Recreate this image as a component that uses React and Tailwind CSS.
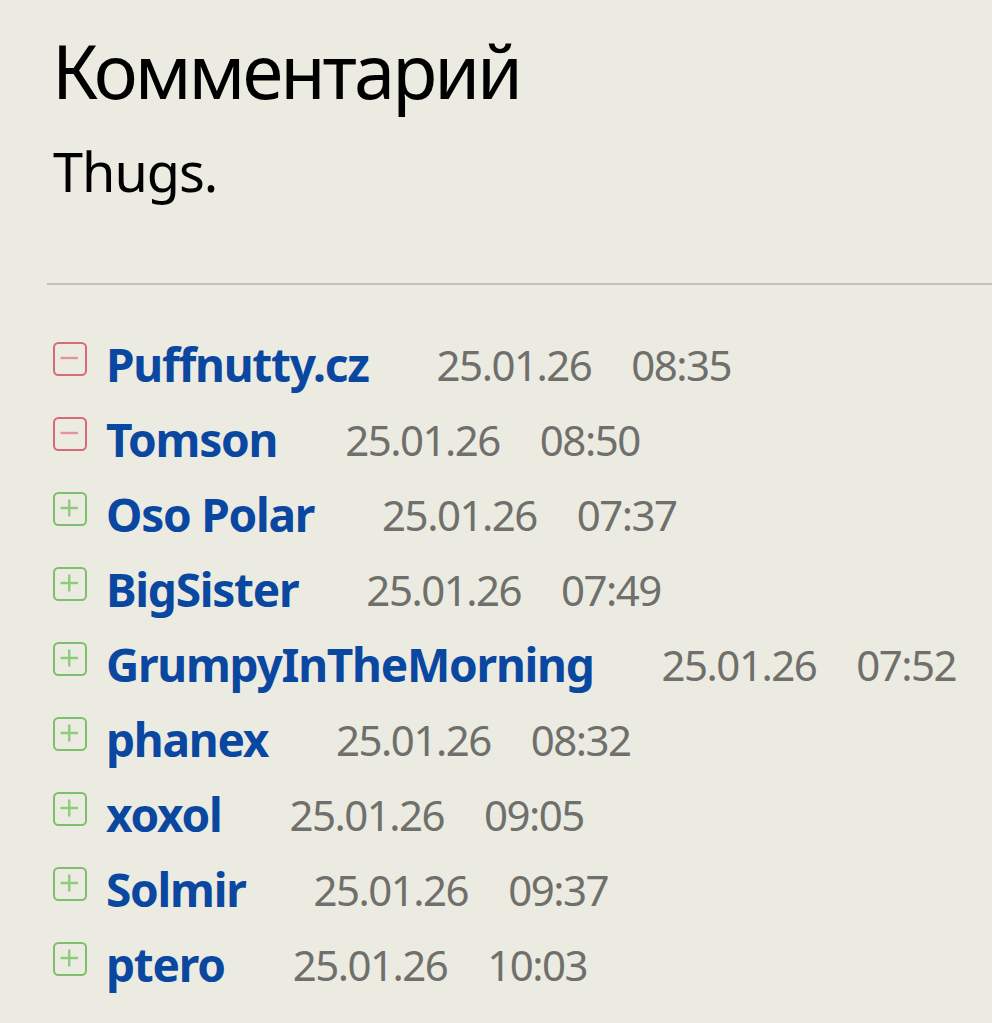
import React from "react";

const rows = [
  { name: "Puffnutty.cz", date: "25.01.26", time: "08:35", open: true },
  { name: "Tomson", date: "25.01.26", time: "08:50", open: true },
  { name: "Oso Polar", date: "25.01.26", time: "07:37" },
  { name: "BigSister", date: "25.01.26", time: "07:49" },
  { name: "GrumpyInTheMorning", date: "25.01.26", time: "07:52" },
  { name: "phanex", date: "25.01.26", time: "08:32" },
  { name: "xoxol", date: "25.01.26", time: "09:05" },
  { name: "Solmir", date: "25.01.26", time: "09:37" },
  { name: "ptero", date: "25.01.26", time: "10:03" },
];

function Toggle({ open }) {
  const box = open ? "#d76a77" : "#7fbe6c";
  const mark = open ? "#e5939c" : "#8ccc7b";
  return (
    <svg width="34" height="34" viewBox="0 0 34 34" className="shrink-0">
      <rect x="1" y="1" width="32" height="32" rx="4.5" fill="none" stroke={box} strokeWidth="2" />
      <line x1="7.5" y1="16" x2="25" y2="16" stroke={mark} strokeWidth="2.4" />
      {!open && <line x1="16.25" y1="7.5" x2="16.25" y2="24.5" stroke={mark} strokeWidth="2.4" />}
    </svg>
  );
}

export default function App() {
  return (
    <div className="min-h-[1023px] w-full bg-[#ecebe1] pl-[53px] pt-[31px] font-['Noto_Sans',sans-serif] overflow-hidden">
      <h1 className="-ml-[1px] text-[74px] leading-[80px] text-black font-normal tracking-[-3px]">Комментарий</h1>
      <p className="mt-[30px] text-[54px] leading-[60px] text-black tracking-[-1px]">Thugs.</p>
      <div className="mt-[82px] ml-[-6px] h-[2px] bg-[#c3c2b6]"></div>
      <ul className="mt-[42px] flex flex-col">
        {rows.map((r) => (
          <li key={r.name} className="flex h-[75px] items-start">
            <div className="mt-[15px]">
              <Toggle open={r.open} />
            </div>
            <span className="ml-[19px] text-[46px] leading-[75px] font-bold text-[#0a47a0] tracking-[-1.25px]">{r.name}</span>
            <span className="ml-[68px] text-[42px] leading-[75px] text-[#6f6f6c] tracking-[-1.5px]">{r.date}</span>
            <span className="ml-[40px] text-[42px] leading-[75px] text-[#6f6f6c] tracking-[-1.5px]">{r.time}</span>
          </li>
        ))}
      </ul>
    </div>
  );
}
